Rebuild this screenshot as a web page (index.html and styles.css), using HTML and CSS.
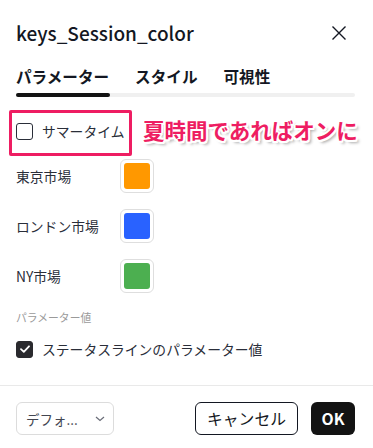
FILE: index.html
```html
<!DOCTYPE html>
<html lang="ja">
<head>
<meta charset="utf-8">
<link rel="stylesheet" href="styles.css">
</head>
<body>
<div class="dialog">
  <div class="header">
    <div class="title">keys_Session_color</div>
    <svg class="close" width="16" height="16" viewBox="0 0 16 16"><path d="M1.5 1.5L14.5 14.5M14.5 1.5L1.5 14.5" stroke="#131722" stroke-width="1.4" fill="none"/></svg>
  </div>
  <div class="tabs">
    <div class="tab active">パラメーター</div>
    <div class="tab">スタイル</div>
    <div class="tab">可視性</div>
  </div>
  <div class="track"><div class="bar"></div></div>

  <div class="content">
    <div class="row summer">
      <span class="cb"></span>
      <span class="label">サマータイム</span>
      <div class="note-box"></div>
      <div class="note-text">夏時間であればオンに</div>
    </div>
    <div class="row color-row first">
      <span class="label name">東京市場</span>
      <span class="swatch"><span class="fill orange"></span></span>
    </div>
    <div class="row color-row">
      <span class="label name">ロンドン市場</span>
      <span class="swatch"><span class="fill blue"></span></span>
    </div>
    <div class="row color-row">
      <span class="label name">NY市場</span>
      <span class="swatch"><span class="fill green"></span></span>
    </div>
    <div class="section">パラメーター値</div>
    <div class="row check-row">
      <span class="cb checked"><svg width="10" height="8" viewBox="0 0 10 8"><path d="M1 4.2L3.8 6.8L9 1.3" stroke="#fff" stroke-width="1.8" fill="none" stroke-linecap="round" stroke-linejoin="round"/></svg></span>
      <span class="label">ステータスラインのパラメーター値</span>
    </div>
  </div>
</div>
<div class="divider"></div>
<div class="footer">
  <div class="select">
    <span>デフォ...</span>
    <svg width="10" height="6" viewBox="0 0 10 6"><path d="M1 1L5 4.5L9 1" stroke="#6a6d78" stroke-width="1.2" fill="none"/></svg>
  </div>
  <div class="spacer"></div>
  <div class="btn cancel">キャンセル</div>
  <div class="btn ok">OK</div>
</div>
</body>
</html>
```

FILE: styles.css
```css
* { box-sizing: border-box; }
html, body {
  margin: 0;
  padding: 0;
  background: #fff;
}
body {
  width: 373px;
  height: 448px;
  overflow: hidden;
  font-family: "Noto Sans CJK JP", "Noto Sans", sans-serif;
  color: #131722;
}
.dialog {
  padding: 0 18px 0 16px;
}
.header {
  display: flex;
  align-items: center;
  justify-content: space-between;
  padding-top: 20px;
  height: 46px;
}
.title {
  font-size: 19px;
  line-height: 26px;
  font-weight: 500;
}
.close {
  margin-right: 8px;
}
.tabs {
  display: flex;
  gap: 26px;
  margin-top: 18px;
  height: 24px;
  align-items: center;
}
.tab {
  font-size: 15.6px;
  font-weight: 700;
  line-height: 24px;
}
.track {
  margin-top: 5px;
  height: 4px;
  border-radius: 2px;
  background: #f0f0f0;
  display: flex;
}
.bar {
  width: 94px;
  height: 4px;
  border-radius: 2px;
  background: #131313;
}
.content {
  position: relative;
}
.row {
  display: flex;
  align-items: center;
}
.label {
  font-size: 13.8px;
  line-height: 20px;
  color: #2a2e39;
}
.summer {
  margin-top: 17px;
  height: 34px;
  position: relative;
}
.cb {
  width: 17px;
  height: 17px;
  border: 1px solid #2a2e39;
  border-radius: 3px;
  margin-right: 9px;
  display: flex;
  align-items: center;
  justify-content: center;
  flex-shrink: 0;
}
.cb.checked {
  background: #2a2a2e;
  border-color: #2a2a2e;
}
.note-box {
  position: absolute;
  left: -7px;
  top: -4px;
  width: 123px;
  height: 46px;
  border: 3px solid #ee1d62;
  border-radius: 2px;
}
.note-text {
  position: absolute;
  left: 127px;
  top: 1px;
  font-size: 21.5px;
  font-weight: 700;
  line-height: 30px;
  color: #ee1d62;
  white-space: nowrap;
  text-shadow:
    -1.5px -1.5px 0 #fff, 1.5px -1.5px 0 #fff, -1.5px 1.5px 0 #fff, 1.5px 1.5px 0 #fff,
    0 -2px 0 #fff, 0 2px 0 #fff, -2px 0 0 #fff, 2px 0 0 #fff,
    3px 3px 3px rgba(0,0,0,0.35);
}
.color-row {
  height: 34px;
  margin-top: 16px;
}
.color-row.first {
  margin-top: 11px;
}
.name {
  width: 104px;
}
.swatch {
  width: 34px;
  height: 34px;
  border: 1px solid #dedede;
  border-radius: 6px;
  padding: 3px;
  display: flex;
}
.fill {
  flex: 1;
  border-radius: 3px;
}
.orange { background: #ff9800; }
.blue { background: #2962ff; }
.green { background: #4caf50; }
.section {
  margin-top: 16px;
  font-size: 10.8px;
  line-height: 16px;
  color: #9a9a9a;
}
.check-row {
  margin-top: 12px;
  height: 24px;
}
.divider {
  margin-top: 24px;
  height: 1px;
  background: #e9e9e9;
}
.footer {
  display: flex;
  align-items: center;
  padding: 16px 18px 0 16px;
}
.spacer { flex: 1; }
.select {
  width: 98px;
  height: 33px;
  border: 1px solid #dcdcdc;
  border-radius: 6px;
  display: flex;
  align-items: center;
  justify-content: space-between;
  padding: 0 8px 0 9px;
  font-size: 13.5px;
  color: #434651;
}
.btn {
  height: 33px;
  border-radius: 6px;
  display: flex;
  align-items: center;
  justify-content: center;
  font-size: 15.8px;
}
.cancel {
  width: 103px;
  border: 1px solid #131722;
  color: #131722;
}
.ok {
  width: 44px;
  margin-left: 13px;
  background: #131313;
  color: #fff;
  font-weight: 700;
}
```
